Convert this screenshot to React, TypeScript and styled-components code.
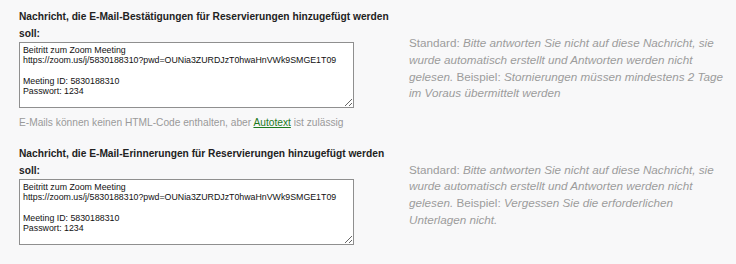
import styled, { createGlobalStyle } from "styled-components";

const GlobalStyle = createGlobalStyle`
    html, body {
        margin: 0;
        padding: 0;
        background: #f8f8f9;
        font-family: "Liberation Sans", Arial, Helvetica, sans-serif;
    }
`;

const Page = styled.div`
    padding: 8px 19px 0 19px;
`;

const Section = styled.section`
    display: grid;
    grid-template-columns: 385px 315px;
    column-gap: 5px;
    align-items: center;
    &:not(:last-child) {
        margin-bottom: 16px;
    }
`;

const Field = styled.div`
    display: flex;
    flex-direction: column;
`;

const Label = styled.label`
    display: block;
    max-width: 373px;
    font-size: 10.2px;
    font-weight: bold;
    line-height: 17px;
    color: #222;
`;

const TextArea = styled.textarea`
    box-sizing: border-box;
    width: 335px;
    height: 66px;
    margin: 0;
    padding: 2px 3px;
    border: 1px solid #8f8f8f;
    border-radius: 0;
    background: #fff;
    font-family: "Liberation Sans", Arial, Helvetica, sans-serif;
    font-size: 8.8px;
    line-height: 10.2px;
    color: #111;
    resize: vertical;
    outline: none;
`;

const Hint = styled.p`
    margin: 9px 0 0 0;
    font-size: 10.2px;
    line-height: 12px;
    color: #9a9a9a;
`;

const AutoLink = styled.a`
    color: #1e7a1e;
    text-decoration: underline;
`;

const Help = styled.p`
    margin: 0;
    font-size: 11.7px;
    line-height: 16.6px;
    color: #9c9c9c;

    em {
        font-style: italic;
    }
`;

const meetingText = `Beitritt zum Zoom Meeting
https://zoom.us/j/5830188310?pwd=OUNia3ZURDJzT0hwaHnVWk9SMGE1T09

Meeting ID: 5830188310
Passwort: 1234`;

interface ISection {
    label: string;
    example: string;
    showHint?: boolean;
}

const sections: ISection[] = [
    {
        label: "Nachricht, die E-Mail-Bestätigungen für Reservierungen hinzugefügt werden soll:",
        example: "Stornierungen müssen mindestens 2 Tage im Voraus übermittelt werden",
        showHint: true,
    },
    {
        label: "Nachricht, die E-Mail-Erinnerungen für Reservierungen hinzugefügt werden soll:",
        example: "Vergessen Sie die erforderlichen Unterlagen nicht.",
    },
];

function MessageSection({ label, example, showHint }: ISection) {
    return (
        <Section>
            <Field>
                <Label>{label}</Label>
                <TextArea defaultValue={meetingText} spellCheck={false} />
                {showHint ? (
                    <Hint>
                        E-Mails können keinen HTML-Code enthalten, aber <AutoLink href="#">Autotext</AutoLink> ist zulässig
                    </Hint>
                ) : null}
            </Field>
            <Help>
                Standard: <em>Bitte antworten Sie nicht auf diese Nachricht, sie wurde automatisch erstellt und Antworten werden nicht gelesen.</em> Beispiel: <em>{example}</em>
            </Help>
        </Section>
    );
}

export default function App() {
    return (
        <>
            <GlobalStyle />
            <Page>
                {sections.map((item) => (
                    <MessageSection key={item.label} {...item} />
                ))}
            </Page>
        </>
    );
}
